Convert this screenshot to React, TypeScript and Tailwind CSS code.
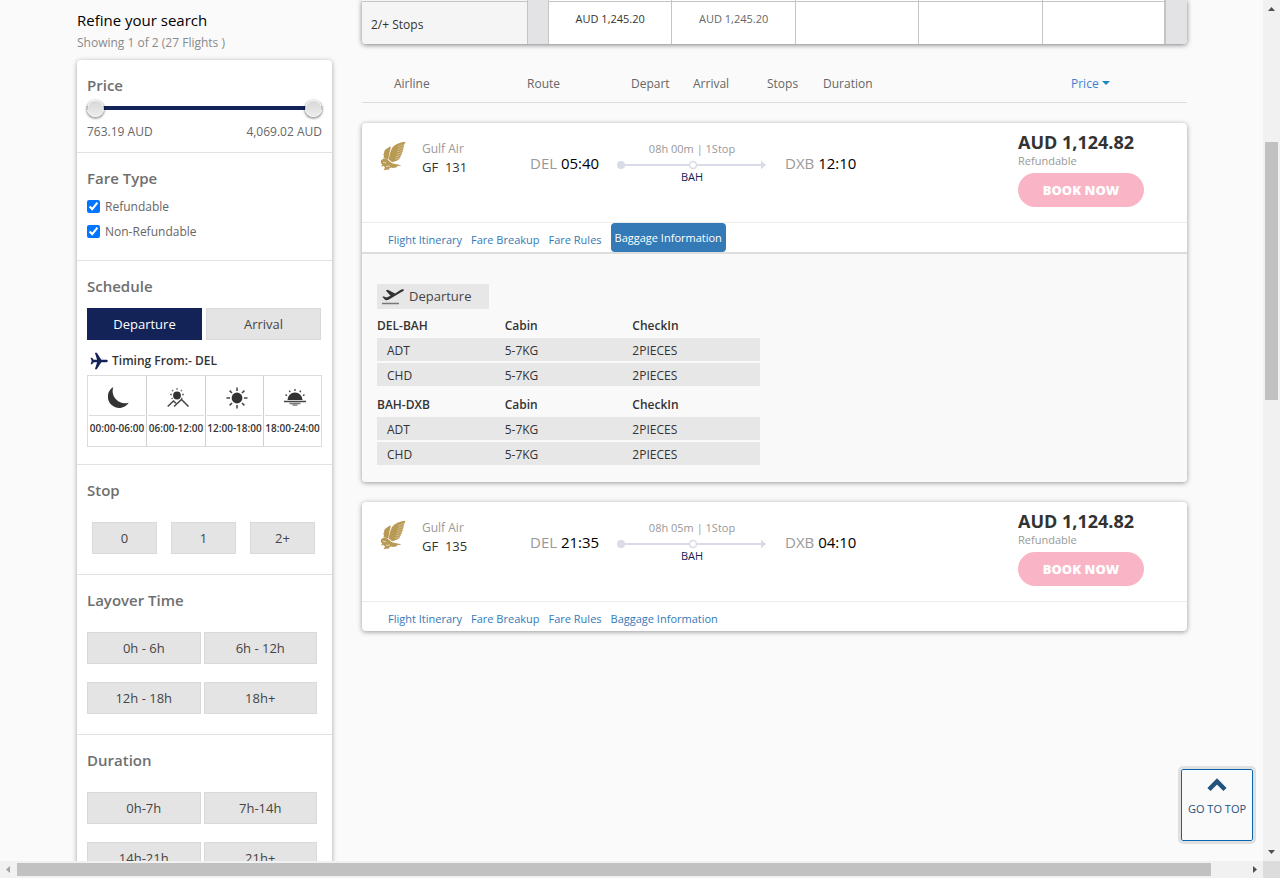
import React, { useState } from "react";

function Section({ title, className = "", children }: { title: string; className?: string; children: React.ReactNode }) {
  return (
    <section className={`border-b border-[#e2e2e2] px-2.5 pt-[15px] ${className}`}>
      <h2 className="pb-px text-[15px] font-semibold leading-5 text-[#6f6f6f]">{title}</h2>
      {children}
    </section>
  );
}

const chip = "h-8 border border-[#d9d9d9] bg-[#e4e4e4] pt-0.5 text-[13px] text-[#444]";
const thumb =
  "pointer-events-none absolute inset-0 h-5 w-full appearance-none bg-transparent " +
  "[&::-webkit-slider-thumb]:pointer-events-auto [&::-webkit-slider-thumb]:h-[17px] [&::-webkit-slider-thumb]:w-[17px] " +
  "[&::-webkit-slider-thumb]:appearance-none [&::-webkit-slider-thumb]:rounded-full [&::-webkit-slider-thumb]:border " +
  "[&::-webkit-slider-thumb]:border-[#f4f4f4] [&::-webkit-slider-thumb]:bg-linear-to-b [&::-webkit-slider-thumb]:from-[#d8d8d8] [&::-webkit-slider-thumb]:to-[#ececec] " +
  "[&::-webkit-slider-thumb]:shadow-[0_1px_2px_1px_rgba(0,0,0,0.35)]";

function OptionGrid({ options }: { options: string[] }) {
  return (
    <div className="mt-[21px] grid grid-cols-2 gap-x-[3px] gap-y-[18px] pr-[5px]">
      {options.map((o) => (
        <button key={o} type="button" className={chip}>{o}</button>
      ))}
    </div>
  );
}

function MoonIcon() {
  return (
    <svg width="22" height="22" viewBox="0 0 22 22" className="fill-[#333]">
      <path d="M5.300 0A11.300 11.300 0 1 0 20.700 15.700 12.400 12.400 0 0 1 5.300 0Z" />
    </svg>
  );
}
function MorningIcon() {
  return (
    <svg width="22" height="20" viewBox="0 0 22 20" fill="none" stroke="#444">
      <circle cx="10" cy="7.500" r="3.900" fill="#333" stroke="none" />
      <path d="M10 0v2M5 2l1.200 1.200M15 2l-1.200 1.200M3 6.500h2M15 6.500h2M4.500 11l1.300-1M15.500 11l-1.300-1" strokeWidth="1.300" stroke="#777" />
      <path d="M.7 18.500 6.500 13l2.500 2.200M7 18.500l7.500-7 7 7" strokeWidth="1.500" />
    </svg>
  );
}
function NoonIcon() {
  return (
    <svg width="22" height="22" viewBox="0 0 22 22" fill="none" stroke="#444" strokeWidth="1.500">
      <circle cx="11" cy="11" r="5.400" fill="#333" stroke="none" />
      <path d="M11 .5v3.500M11 18v3.500M.5 11H4M18 11h3.500M3.600 3.600 6 6M16 16l2.400 2.400M18.400 3.600 16 6M6 16l-2.400 2.400" />
    </svg>
  );
}
function EveningIcon() {
  return (
    <svg width="22" height="18" viewBox="0 0 22 18" fill="none" stroke="#444">
      <path d="M3.500 11a7.500 7.500 0 0 1 15 0Z" fill="#333" stroke="none" />
      <path d="M11 0v2M5.200 1.600l1 1.600M16.800 1.600l-1 1.600M1.500 5.500 3 6.700M20.500 5.500 19 6.700" strokeWidth="1.300" />
      <path d="M0 12.500h22" strokeWidth="1.500" />
      <path d="M5.500 14.500h11M8.500 16.200h5" strokeWidth="1.300" stroke="#777" />
    </svg>
  );
}

const slots = [
  { label: "00:00-06:00", icon: <MoonIcon /> },
  { label: "06:00-12:00", icon: <MorningIcon /> },
  { label: "12:00-18:00", icon: <NoonIcon /> },
  { label: "18:00-24:00", icon: <EveningIcon /> },
];

function Sidebar() {
  const [low, setLow] = useState(763.19);
  const [high, setHigh] = useState(4069.02);
  return (
    <aside className="w-[255px] shrink-0 pt-2.5">
      <h1 className="text-[15px] font-medium leading-5 text-black">Refine your search</h1>
      <p className="mt-1 text-[12px] leading-[18px] text-[#8a8a8a]">Showing 1 of 2 (27 Flights )</p>
      <div className="mt-2 rounded bg-white shadow-[0_1px_5px_rgba(0,0,0,0.35)]">
        <Section title="Price" className="pb-[11px]">
          <div className="relative mt-0.5 flex h-5 items-center">
            <div className="h-1 w-full bg-[#132257]" />
            <input type="range" aria-label="Lowest price" min={763.19} max={4069.02} step={0.01} value={low} onChange={(e) => setLow(Number(e.target.value))} className={thumb} />
            <input type="range" aria-label="Highest price" min={763.19} max={4069.02} step={0.01} value={high} onChange={(e) => setHigh(Number(e.target.value))} className={thumb} />
          </div>
          <div className="mt-[5px] flex justify-between text-[12px] leading-[18px] text-[#666]">
            <span>763.19 AUD</span>
            <span>4,069.02 AUD</span>
          </div>
        </Section>
        <Section title="Fare Type" className="pb-4">
          <div className="mt-[5px]">
            {["Refundable", "Non-Refundable"].map((f) => (
              <label key={f} className="flex h-[25px] items-center gap-[5px] text-[12px] text-[#666]">
                <input type="checkbox" defaultChecked className="h-[13px] w-[13px] accent-[#0075ff]" />
                {f}
              </label>
            ))}
          </div>
        </Section>
        <Section title="Schedule" className="pb-[17px]">
          <div className="mt-[11px] grid grid-cols-2 gap-1 pr-px">
            <button type="button" className="h-8 bg-[#132257] pt-0.5 text-[13px] text-white">Departure</button>
            <button type="button" className={chip}>Arrival</button>
          </div>
          <div className="flex h-[35px] items-center gap-1 pt-1.5 pl-[3px] text-[12px] font-semibold text-[#333]">
            <svg width="18" height="18" viewBox="0 0 18 18" className="fill-[#132257]">
              <path d="M16.500 7.800H11.300L6.800.8H4.900l2.200 7H3.700L2.100 5.700H.6L1.700 9 .6 12.300h1.500l1.600-2.100h3.400l-2.200 7h1.900l4.500-7h5.200c1.700 0 1.700-2.400 0-2.400Z" />
            </svg>
            Timing From:- DEL
          </div>
          <div className="grid h-[72px] grid-cols-[59px_59px_58px_1fr] border border-[#dcdcdc]">
            {slots.map((s) => (
              <button key={s.label} type="button" className="flex min-w-0 flex-col items-stretch border-r border-[#cfcfcf] px-px last:border-r-0">
                <span className="flex h-10 items-center justify-center border-b border-[#dcdcdc] pt-1 pl-1">{s.icon}</span>
                <span className="flex h-6 items-center justify-center text-[10px] font-semibold whitespace-nowrap text-[#333]">{s.label}</span>
              </button>
            ))}
          </div>
        </Section>
        <Section title="Stop" className="pb-5">
          <div className="mt-[21px] flex gap-3.5 pl-[5px]">
            {["0", "1", "2+"].map((s) => (
              <button key={s} type="button" className={`w-[65px] ${chip}`}>{s}</button>
            ))}
          </div>
        </Section>
        <Section title="Layover Time" className="pb-5">
          <OptionGrid options={["0h - 6h", "6h - 12h", "12h - 18h", "18h+"]} />
        </Section>
        <Section title="Duration" className="pb-5">
          <OptionGrid options={["0h-7h", "7h-14h", "14h-21h", "21h+"]} />
        </Section>
      </div>
    </aside>
  );
}

function FalconLogo() {
  return (
    <svg width="26" height="30" viewBox="0 0 26 30" className="fill-[#b89a55]">
      <path d="M25.500.8C21 1.200 14.500 3.200 12 7.200c-1.800 3-2.600 7.500-3.300 11.300l3.600 2.700 4.500-1.500 2.700-1.700 1.800-3.700 1.700-4.800L24 4.500Z" />
      <path d="M10.300 5.500C7.500 7 4.500 8.500 4.200 11l-.8 3 .6 1.200-.6 2 2.500.6 2.300 1c1-4 1-8 2.600-12Z" />
      <path d="M1 19.500c1.500-2 4.500-2.500 7-.6l4 3.300c2.500 1 6 .8 9.500 2.300l-5 .8 1 .7-4 .9-2.500-.5-2 1.200.5 1-3.500.1-2.500.6 1.500-2.600L3.500 25 1 25.500l1.300-2L.8 22Z" />
      <path d="m18 5.800 6-2.300M17.500 8.500 24 6M17 11l6.500-2.300M16.500 13.500l6.500-2.100M15.500 16l7-2M15 18.300l6-1.700" stroke="#fff" strokeWidth=".5" opacity=".7" />
      <path d="M3 21.300l3 .5M6 25.500l4-.5" stroke="#fff" strokeWidth=".6" />
    </svg>
  );
}

function PlaneTakeoff() {
  return (
    <svg width="24" height="16" viewBox="0 0 24 16" className="fill-[#333]">
      <path d="m1.200 7.800 1.700-.4 2.600 1.200 4-1.800L4.800 1.600l1.900-.8 7.400 3.700L19.400 1c1.600-.9 3.600-.9 3.500.2-.1.500-1 1-2 1.600L8 10.600c-1.500.8-3 1-4 .2Z" />
      <path d="M1 13.800h17v1.400H1z" className="fill-[#777]" />
    </svg>
  );
}

function BaggageTable({ leg }: { leg: string }) {
  return (
    <table className="mt-[5px] w-full max-w-[383px] table-fixed border-separate border-spacing-0 text-left text-[12px] text-[#333]">
      <thead>
        <tr className="h-6">
          <th className="p-0 font-semibold">{leg}</th>
          <th className="p-0 font-semibold">Cabin</th>
          <th className="p-0 font-semibold">CheckIn</th>
        </tr>
      </thead>
      <tbody>
        {["ADT", "CHD"].map((p) => (
          <tr key={p} className="h-[25px] bg-[#e7e7e7]">
            <td className="border-b-2 border-[#f9f9f9] p-0 pt-0.5 pl-2.5">{p}</td>
            <td className="border-b-2 border-[#f9f9f9] p-0 pt-0.5">5-7KG</td>
            <td className="border-b-2 border-[#f9f9f9] p-0 pt-0.5">2PIECES</td>
          </tr>
        ))}
      </tbody>
    </table>
  );
}

type Flight = { no: string; dep: string; arr: string; dur: string; open: boolean };

function FlightCard({ f }: { f: Flight }) {
  return (
    <article className="mt-5 overflow-clip rounded bg-white shadow-[0_1px_5px_rgba(0,0,0,0.4)]">
      <div className="grid h-[100px] grid-cols-[60px_108px_87px_150px_1fr_169px] border-b border-[#ededed]">
        <div className="pt-[18px] pl-[18px]"><FalconLogo /></div>
        <div className="pt-[17px] leading-[18px]">
          <div className="text-[12px] text-[#999]">Gulf Air</div>
          <div className="text-[13px] whitespace-pre text-[#333]">{`GF  ${f.no}`}</div>
        </div>
        <div className="pt-[29px] text-[15px] leading-[22px] whitespace-nowrap text-[#999]">
          DEL <span className="text-black">{f.dep}</span>
        </div>
        <div className="pt-[17px] text-center">
          <div className="text-[11px] leading-[18px] text-[#999]">{f.dur} | 1Stop</div>
          <svg viewBox="0 0 150 10" className="mt-0.5 h-2.5 w-full">
            <path d="M4 5h142" stroke="#d9dbe6" strokeWidth="2" />
            <circle cx="4" cy="5" r="4" fill="#d9dbe6" />
            <circle cx="76" cy="5" r="3.500" fill="#fff" stroke="#d9dbe6" strokeWidth="1.500" />
            <path d="m144 .5 5 4.500-5 4.500Z" fill="#d9dbe6" />
          </svg>
          <div className="text-[11px] leading-[14px] text-[#132257]">BAH</div>
        </div>
        <div className="pt-[29px] pl-[18px] text-[15px] leading-[22px] whitespace-nowrap text-[#999]">
          DXB <span className="text-black">{f.arr}</span>
        </div>
        <div className="pt-2">
          <div className="text-[18px] font-bold leading-[22px] whitespace-nowrap text-[#333]">AUD 1,124.82</div>
          <div className="text-[11px] leading-4 text-[#999]">Refundable</div>
          <button type="button" className="mt-1 block h-[34px] w-[126px] rounded-full bg-[#f9b5c5] pt-px text-[13px] font-extrabold text-white">BOOK NOW</button>
        </div>
      </div>
      <nav className="flex h-[29px] gap-[9px] pl-[26px] text-[11px] leading-4 text-[#337ab7]">
        <a href="#itinerary" className="pt-[9px]">Flight Itinerary</a>
        <a href="#breakup" className="pt-[9px]">Fare Breakup</a>
        <a href="#rules" className="pt-[9px]">Fare Rules</a>
        {f.open ? (
          <a href="#baggage" className="flex items-center rounded bg-[#337ab7] px-1 font-medium text-white">Baggage Information</a>
        ) : (
          <a href="#baggage" className="pt-[9px]">Baggage Information</a>
        )}
      </nav>
      {f.open && (
        <div className="border-t-2 border-[#ddd] bg-[#f9f9f9] px-[15px] pt-[30px] pb-[15px]">
          <div className="flex h-[25px] w-28 items-center gap-1 bg-[#e7e7e7] pl-1 text-[13px] text-[#444]">
            <PlaneTakeoff />
            Departure
          </div>
          <BaggageTable leg="DEL-BAH" />
          <BaggageTable leg="BAH-DXB" />
        </div>
      )}
    </article>
  );
}

const flights: Flight[] = [
  { no: "131", dep: "05:40", arr: "12:10", dur: "08h 00m", open: true },
  { no: "135", dep: "21:35", arr: "04:10", dur: "08h 05m", open: false },
];

export default function App() {
  return (
    <div className="relative flex h-screen flex-col overflow-hidden bg-[#fafafa] font-['Open_Sans','Noto_Sans',sans-serif]">
      <div className="flex min-h-0 flex-1">
        <div className="flex min-w-0 flex-1 gap-[30px] overflow-hidden pr-[76px] pl-[77px]">
          <Sidebar />
          <main className="min-w-0 flex-1">
            <div className="overflow-clip rounded-b bg-white shadow-[0_1px_5px_rgba(0,0,0,0.5)]">
              <table className="h-11 w-full table-fixed border-separate border-spacing-0 text-[11px] text-[#333]">
                <colgroup>
                  <col className="w-[166px]" />
                  <col className="w-[21px]" />
                  <col /><col /><col /><col /><col />
                  <col className="w-[21px]" />
                </colgroup>
                <tbody>
                  <tr className="h-px">
                    <td className="border-r border-[#c4c4c4] bg-[#f5f5f5] p-0" />
                    <td rowSpan={2} className="border-r border-[#c4c4c4] bg-[#e3e3e5] p-0" />
                    <td className="border-r border-[#c4c4c4] p-0" />
                    <td className="border-r border-[#c4c4c4] p-0" />
                    <td className="border-r border-[#c4c4c4] p-0" />
                    <td className="border-r border-[#c4c4c4] p-0" />
                    <td className="border-r-2 border-[#c4c4c4] p-0" />
                    <td rowSpan={2} className="bg-[#e3e3e5] p-0" />
                  </tr>
                  <tr>
                    <th className="border-t border-r border-[#c4c4c4] bg-[#f5f5f5] p-0 pt-1 pl-[9px] text-left text-[12px] font-normal">2/+ Stops</th>
                    <td className="border-t border-r border-[#c4c4c4] p-0 pb-2 text-center">AUD 1,245.20</td>
                    <td className="border-t border-r border-[#c4c4c4] p-0 pb-2 text-center text-[#666]">AUD 1,245.20</td>
                    <td className="border-t border-r border-[#c4c4c4] p-0" />
                    <td className="border-t border-r border-[#c4c4c4] p-0" />
                    <td className="border-t border-r-2 border-[#c4c4c4] p-0" />
                  </tr>
                </tbody>
              </table>
            </div>
            <div className="grid h-[59px] grid-cols-[133px_104px_62px_74px_56px_1fr_116px] items-center border-b border-[#dcdcdc] pt-[31px] pb-[9px] pl-8 text-[12px] text-[#666]">
              <span>Airline</span>
              <span>Route</span>
              <span>Depart</span>
              <span>Arrival</span>
              <span>Stops</span>
              <span>Duration</span>
              <button type="button" className="flex items-center gap-[3px] text-[#3b82d6]">
                Price
                <svg width="8" height="6" viewBox="0 0 8 6" fill="#1b87c9"><path d="M0 0h8L4 4Z" /></svg>
              </button>
            </div>
            {flights.map((f) => <FlightCard key={f.no} f={f} />)}
          </main>
        </div>
        <div className="flex w-[17px] flex-col items-center bg-[#f1f1f1]" aria-hidden="true">
          <svg width="17" height="17" viewBox="0 0 17 17" fill="#505050"><path d="M8.500 7 12 11H5Z" /></svg>
          <div className="w-[13px] flex-1 pt-[125px]"><div className="h-[258px] bg-[#c1c1c1]" /></div>
          <svg width="17" height="17" viewBox="0 0 17 17" fill="#505050"><path d="M5 6h7l-3.500 4Z" /></svg>
        </div>
      </div>
      <div className="flex h-[17px] shrink-0 items-center bg-[#f1f1f1]" aria-hidden="true">
        <svg width="17" height="17" viewBox="0 0 17 17" fill="#a3a3a3"><path d="M10 5v7L6 8.500Z" /></svg>
        <div className="flex flex-1 pr-[35px]"><div className="h-[13px] flex-1 bg-[#c1c1c1]" /></div>
        <svg width="17" height="17" viewBox="0 0 17 17" fill="#505050"><path d="M7 5v7l4-3.500Z" /></svg>
        <div className="h-full w-[17px] bg-[#dcdcdc]" />
      </div>
      <button type="button" className="absolute right-[27px] bottom-[37px] flex h-[72px] w-[72px] flex-col items-center rounded-xs border border-[#0a66b0] bg-[#fafafa] pt-2 text-[11px] text-[#23527c] outline-[3px] outline-[#e0e0e0]">
        <svg width="20" height="14" viewBox="0 0 20 14" fill="none" stroke="#23527c" strokeWidth="4.500"><path d="m2 11.500 8-8 8 8" /></svg>
        <span className="mt-[9px] whitespace-nowrap leading-4">GO TO TOP</span>
      </button>
    </div>
  );
}
